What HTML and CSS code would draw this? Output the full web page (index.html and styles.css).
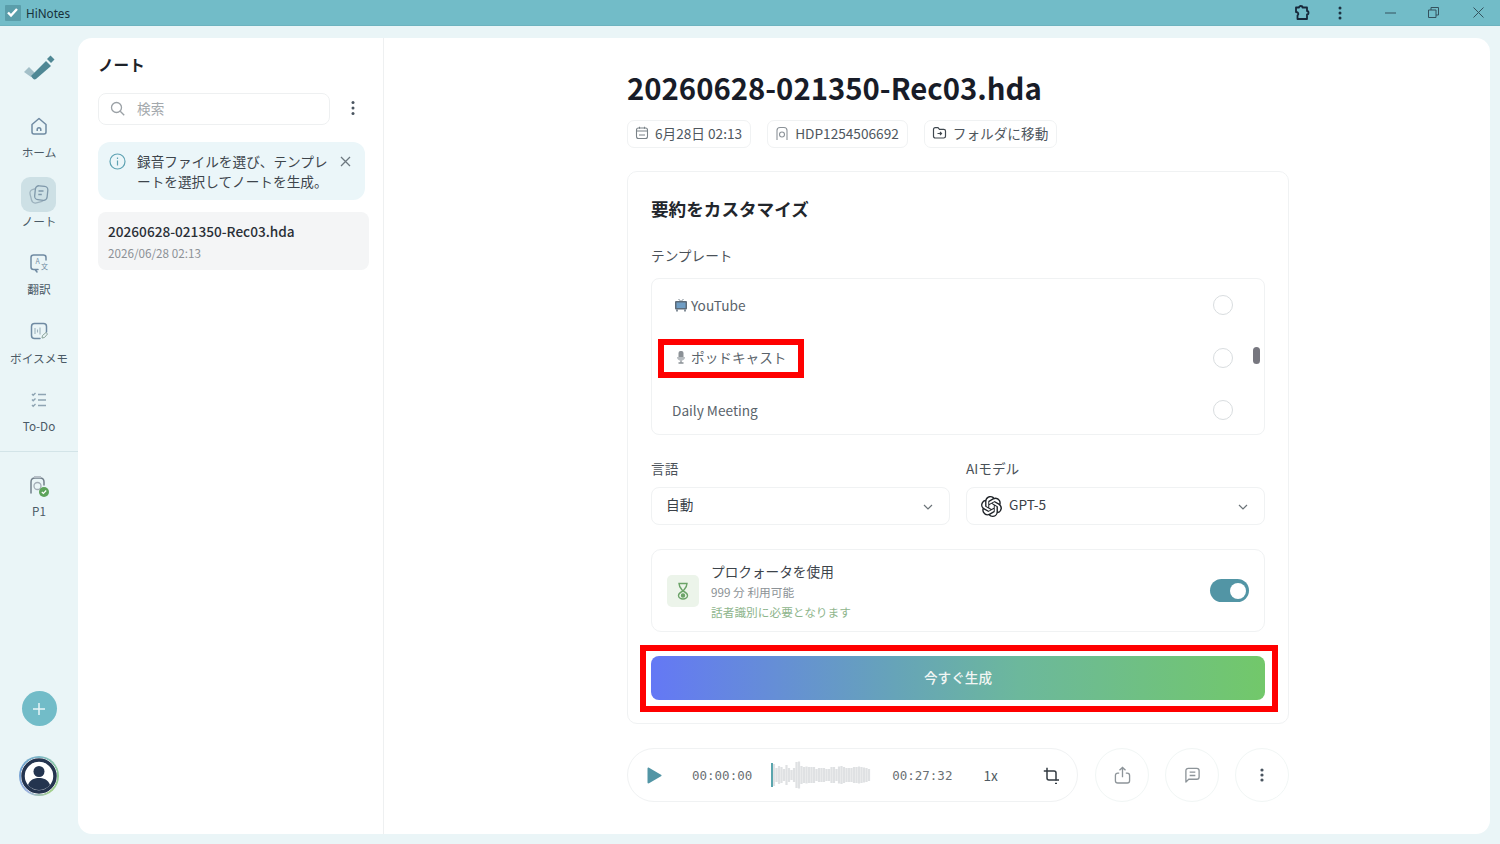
FILE: index.html
```html
<!DOCTYPE html>
<html lang="ja">
<head>
    <meta charset="UTF-8">
    <title>HiNotes</title>
    <link rel="stylesheet" href="styles.css">
</head>
<body>

    <header class="titlebar">
        <div class="app-name">
            <span class="app-icon">
                <svg width="15" height="15" viewBox="0 0 15 15"><path d="M3 7.500l3 3 6-6.500" fill="none" stroke="#fff" stroke-width="2.400"/></svg>
            </span>
            HiNotes
        </div>
        <div class="window-btns">
            <svg class="win-puzzle" width="18" height="18" viewBox="0 0 18 18"><path d="M3 3.500h3c0-2 3.500-2 3.500 0h4.500v3.500c2 0 2 3.500 0 3.500v4.500H4.500v-3.500c1.500-1 1-3.500-1.500-3.500z" fill="none" stroke="#16283a" stroke-width="1.800" stroke-linejoin="round"/></svg>
            <svg class="win-dots" width="4" height="14" viewBox="0 0 4 14"><circle cx="2" cy="2" r="1.500" fill="#1d3140"/><circle cx="2" cy="7" r="1.500" fill="#1d3140"/><circle cx="2" cy="12" r="1.500" fill="#1d3140"/></svg>
            <svg class="win-min" width="11" height="2" viewBox="0 0 11 2"><path d="M0 1h11" stroke="#34525e" stroke-width="1"/></svg>
            <svg class="win-max" width="11" height="11" viewBox="0 0 11 11"><path d="M.5 3h7.500v7.500H.5zM3 3V.5h7.500V8H8" fill="none" stroke="#34525e"/></svg>
            <svg class="win-close" width="11" height="11" viewBox="0 0 11 11"><path d="M.5.500l10 10M10.500.500l-10 10" stroke="#34525e"/></svg>
        </div>
    </header>

    <div class="app">
        <nav class="sidebar">
            <div class="logo">
                <svg width="32" height="28" viewBox="0 0 32 28">
                    <path d="M1 18l5-5 6 6-4 4z" fill="#a3bfc8"/>
                    <path d="M8 23L23 8l5 5-15 13c-2 1-3 0-5-3z" fill="#4f8794" transform="translate(0 -1)"/>
                    <path d="M25 6l3.500-3.500 4 4L29 10z" fill="#4f8794" transform="translate(-1 -1)"/>
                </svg>
            </div>
            <a class="nav-item">
                <span class="nav-icon">
                    <svg width="20" height="20" viewBox="0 0 20 20" fill="none" stroke="#6f8aa2" stroke-width="1.500"><path d="M3 8.500L10 2.500l7 6v7.500c0 1.200-.8 2-2 2H5c-1.200 0-2-.8-2-2z" stroke-linejoin="round"/><path d="M8.200 15v-1.500a1.800 1.800 0 0 1 3.600 0V15"/></svg>
                </span>
                ホーム
            </a>
            <a class="nav-item active">
                <span class="nav-icon">
                    <svg width="22" height="22" viewBox="0 0 22 22" fill="none" stroke="#7f98aa" stroke-width="1.300"><rect x="2.500" y="5.500" width="13" height="14" rx="4" transform="rotate(-14 9 12)" stroke="#9db2be"/><rect x="7" y="3" width="12.500" height="14" rx="3.500" transform="rotate(6 13 10)" fill="#cde0e5"/><path d="M10.500 8h5M10.300 11.500h3.500"/></svg>
                </span>
                ノート
            </a>
            <a class="nav-item">
                <span class="nav-icon">
                    <svg width="20" height="20" viewBox="0 0 20 20" fill="none"><path d="M9 16.500H4.500C3 16.500 2 15.500 2 14V4.500C2 3 3 2 4.500 2h10C16 2 17 3 17 4.500V7M6 16.500L8 19" stroke="#6f8aa2" stroke-width="1.500" stroke-linecap="round"/><text x="6.500" y="10.500" class="icon-text">A</text><text x="12" y="16" class="icon-text">文</text></svg>
                </span>
                翻訳
            </a>
            <a class="nav-item">
                <span class="nav-icon">
                    <svg width="20" height="20" viewBox="0 0 20 20" fill="none" stroke="#6f8aa2" stroke-width="1.500"><path d="M11 17.500H5.500C3.500 17.500 2.500 16.500 2.500 14.500v-9c0-2 1-3 3-3h9c2 0 3 1 3 3V11" stroke-linecap="round"/><path d="M6 7v6M8.500 8.500v3M11 6.500v7" stroke-width="1.100" stroke="#9db2be"/><path d="M13 17l.5-2.500 3.500-3 1.500 1.500-3 3.500z" stroke-width="1" stroke="#8aa39a"/></svg>
                </span>
                ボイスメモ
            </a>
            <a class="nav-item">
                <span class="nav-icon">
                    <svg width="18" height="18" viewBox="0 0 18 18" fill="none" stroke="#8ea4b3" stroke-width="1.400"><path d="M2 3l1.200 1.200L5.500 2M2 8.500l1.200 1.200 2.300-2.200M2 14l1.200 1.200 2.300-2.200"/><path d="M8 3.500h8M8 9h8M8 14.500h8"/></svg>
                </span>
                To-Do
            </a>
            <div class="nav-divider"></div>
            <a class="nav-item device">
                <span class="nav-icon">
                    <svg width="22" height="24" viewBox="0 0 22 24" fill="none"><path d="M3 19V8c0-2.500 1.500-4 4-4h5c2.500 0 4 1.500 4 4v3" stroke="#73808c" stroke-width="1.500" stroke-linecap="round"/><path d="M6 3h7" stroke="#b5bec6" stroke-width="2"/><circle cx="9.500" cy="12" r="3.500" stroke="#a3adb6" stroke-width="1.300"/><circle cx="16" cy="18" r="5" fill="#5da35a"/><path d="M13.800 18l1.600 1.500 2.800-3" stroke="#fff" stroke-width="1.200"/></svg>
                </span>
                P1
            </a>
            <button class="add-btn">
                <svg width="14" height="14" viewBox="0 0 14 14"><path d="M7 1v12M1 7h12" stroke="#e8f5f7" stroke-width="1.500"/></svg>
            </button>
            <div class="avatar">
                <svg width="36" height="36" viewBox="0 0 36 36">
                    <circle cx="18" cy="18" r="16" fill="#fff" stroke="#24344f" stroke-width="3.500"/>
                    <circle cx="18" cy="13.500" r="5.500" fill="#24344f"/>
                    <path d="M7 27c2-6 7-7 11-7s9 1 11 7c-3 3.500-7 5-11 5s-8-1.500-11-5z" fill="#24344f"/>
                </svg>
            </div>
        </nav>

        <main class="panel">
            <section class="note-list">
                <h2 class="list-title">ノート</h2>
                <div class="search-row">
                    <div class="search-box">
                        <svg width="15" height="15" viewBox="0 0 15 15" fill="none" stroke="#9ba1a6" stroke-width="1.300"><circle cx="6.500" cy="6.500" r="5"/><path d="M10.200 10.200l4 4"/></svg>
                        <span>検索</span>
                    </div>
                    <svg class="dots-icon" width="4" height="16" viewBox="0 0 4 16"><circle cx="2" cy="2.500" r="1.500" fill="#4a5560"/><circle cx="2" cy="8" r="1.500" fill="#4a5560"/><circle cx="2" cy="13.500" r="1.500" fill="#4a5560"/></svg>
                </div>
                <div class="info-box">
                    <svg class="info-icon" width="17" height="17" viewBox="0 0 17 17" fill="none" stroke="#5fa3b3" stroke-width="1.200"><circle cx="8.500" cy="8.500" r="7.500"/><path d="M8.500 7.500v5M8.500 4.500v1.400"/></svg>
                    <p>録音ファイルを選び、テンプレートを選択してノートを生成。</p>
                    <svg class="info-close" width="11" height="11" viewBox="0 0 11 11"><path d="M1 1l9 9M10 1l-9 9" stroke="#6d7880" stroke-width="1.300"/></svg>
                </div>
                <div class="note-item">
                    <div class="note-name">20260628-021350-Rec03.hda</div>
                    <div class="note-date">2026/06/28 02:13</div>
                </div>
            </section>

            <section class="detail">
                <h1 class="detail-title">20260628-021350-Rec03.hda</h1>
                <div class="chips">
                    <div class="chip">
                        <svg width="14" height="14" viewBox="0 0 14 14" fill="none" stroke="#7a8288" stroke-width="1.100"><rect x="1.500" y="2" width="11" height="10.500" rx="2"/><path d="M1.500 5h11M4.500 .8v2M9.500 .8v2M4 9h6" /></svg>
                        6月28日 02:13
                    </div>
                    <div class="chip">
                        <svg width="14" height="15" viewBox="0 0 14 15" fill="none" stroke="#8b9298" stroke-width="1.100"><path d="M2 14V4.500C2 2.500 3 1.500 5 1.500h4c2 0 3 1 3 3V14"/><circle cx="7" cy="8.500" r="2.500"/></svg>
                        HDP1254506692
                    </div>
                    <div class="chip">
                        <svg width="15" height="14" viewBox="0 0 15 14" fill="none" stroke="#40484f" stroke-width="1.200"><path d="M1.500 3.500c0-1 .7-1.800 1.800-1.800h2.700l1.500 1.600h4.200c1 0 1.800.8 1.800 1.800v5.200c0 1-.8 1.700-1.800 1.700H3.300c-1.100 0-1.800-.7-1.800-1.700z"/><path d="M5.500 7.500h4M8 6l1.500 1.500L8 9"/></svg>
                        フォルダに移動
                    </div>
                </div>

                <div class="card">
                    <h3 class="card-title">要約をカスタマイズ</h3>
                    <div class="field-label template-label">テンプレート</div>
                    <div class="template-list">
                        <div class="template-row">
                            <span class="template-name with-icon">
                                <svg width="14" height="14" viewBox="0 0 14 14"><path d="M4.500 1l2.500 2.500L9.500 1" fill="none" stroke="#7a8690" stroke-width="1"/><rect x="1" y="3" width="12" height="8.500" rx="1" fill="#5c6a78"/><rect x="2.500" y="4.500" width="9" height="5.500" fill="#6f9dc4"/><path d="M3 11.500v2M11 11.500v2" stroke="#5c6a78" stroke-width="1.500"/></svg>
                                YouTube
                            </span>
                            <span class="radio"></span>
                        </div>
                        <div class="template-row">
                            <span class="template-name with-icon">
                                <svg width="14" height="14" viewBox="0 0 14 14"><rect x="4.500" y="1" width="5" height="8" rx="2" fill="#8b9196"/><path d="M3 7c0 5 8 5 8 0" fill="#b7bcc0"/><path d="M7 10.500v2M4.500 13h5" stroke="#8b9196" stroke-width="1.300"/></svg>
                                ポッドキャスト
                            </span>
                            <span class="radio"></span>
                            <span class="highlight highlight-podcast"></span>
                        </div>
                        <div class="template-row">
                            <span class="template-name">Daily Meeting</span>
                            <span class="radio"></span>
                        </div>
                        <span class="scroll-thumb"></span>
                    </div>

                    <div class="select-row">
                        <div class="select-col">
                            <div class="field-label">言語</div>
                            <div class="select">
                                <span>自動</span>
                                <svg class="chevron" width="10" height="6" viewBox="0 0 10 6"><path d="M1 1l4 4 4-4" fill="none" stroke="#6b7378" stroke-width="1.200"/></svg>
                            </div>
                        </div>
                        <div class="select-col">
                            <div class="field-label">AIモデル</div>
                            <div class="select">
                                <span class="model">
                                    <svg width="21" height="21" viewBox="0 0 24 24"><path fill="#1f2328" d="M22.2819 9.8211a5.9847 5.9847 0 0 0-.5157-4.9108 6.0462 6.0462 0 0 0-6.5098-2.9A6.0651 6.0651 0 0 0 4.9807 4.1818a5.9847 5.9847 0 0 0-3.9977 2.9 6.0462 6.0462 0 0 0 .7427 7.0966 5.98 5.98 0 0 0 .511 4.9107 6.051 6.051 0 0 0 6.5146 2.9001A5.9847 5.9847 0 0 0 13.2599 24a6.0557 6.0557 0 0 0 5.7718-4.2058 5.9894 5.9894 0 0 0 3.9977-2.9001 6.0557 6.0557 0 0 0-.7475-7.0729zm-9.022 12.6081a4.4755 4.4755 0 0 1-2.8764-1.0408l.1419-.0804 4.7783-2.7582a.7948.7948 0 0 0 .3927-.6813v-6.7369l2.02 1.1686a.071.071 0 0 1 .038.052v5.5826a4.504 4.504 0 0 1-4.4945 4.4944zm-9.6607-4.1254a4.4708 4.4708 0 0 1-.5346-3.0137l.142.0852 4.783 2.7582a.7712.7712 0 0 0 .7806 0l5.8428-3.3685v2.3324a.0804.0804 0 0 1-.0332.0615L9.74 19.9502a4.4992 4.4992 0 0 1-6.1408-1.6464zM2.3408 7.8956a4.485 4.485 0 0 1 2.3655-1.9728V11.6a.7664.7664 0 0 0 .3879.6765l5.8144 3.3543-2.0201 1.1685a.0757.0757 0 0 1-.071 0l-4.8303-2.7865A4.504 4.504 0 0 1 2.3408 7.872zm16.5963 3.8558L13.1038 8.364 15.1192 7.2a.0757.0757 0 0 1 .071 0l4.8303 2.7913a4.4944 4.4944 0 0 1-.6765 8.1042v-5.6772a.79.79 0 0 0-.407-.667zm2.0107-3.0231l-.142-.0852-4.7735-2.7818a.7759.7759 0 0 0-.7854 0L9.409 9.2297V6.8974a.0662.0662 0 0 1 .0284-.0615l4.8303-2.7866a4.4992 4.4992 0 0 1 6.6802 4.66zM8.3065 12.863l-2.02-1.1638a.0804.0804 0 0 1-.038-.0567V6.0742a4.4992 4.4992 0 0 1 7.3757-3.4537l-.142.0805L8.704 5.459a.7948.7948 0 0 0-.3927.6813zm1.0976-2.3654l2.602-1.4998 2.6069 1.4998v2.9994l-2.5974 1.4997-2.6067-1.4997Z"/></svg>
                                    GPT-5
                                </span>
                                <svg class="chevron" width="10" height="6" viewBox="0 0 10 6"><path d="M1 1l4 4 4-4" fill="none" stroke="#6b7378" stroke-width="1.200"/></svg>
                            </div>
                        </div>
                    </div>

                    <div class="quota">
                        <div class="quota-icon">
                            <svg width="14" height="18" viewBox="0 0 14 18" fill="none" stroke="#6ba368" stroke-width="1.400"><path d="M3 1.500h8c0 3.500-2 5-4 7.500-2-2.500-4-4-4-7.500zM7 9c-3 1.500-4.500 3-4.500 4.500a4.500 3.500 0 0 0 9 0C11.500 12 10 10.500 7 9z"/><circle cx="7" cy="13.500" r="1.500" fill="#6ba368"/></svg>
                        </div>
                        <div class="quota-text">
                            <div class="quota-title">プロクォータを使用</div>
                            <div class="quota-sub">999 分 利用可能</div>
                            <div class="quota-note">話者識別に必要となります</div>
                        </div>
                        <div class="toggle"><span class="toggle-knob"></span></div>
                    </div>

                    <button class="generate-btn">
                        今すぐ生成
                        <span class="highlight highlight-generate"></span>
                    </button>
                </div>

                <div class="player-row">
                    <div class="player">
                        <svg class="play-icon" width="16" height="17" viewBox="0 0 16 17"><path d="M1.500 1.500C1.500.8 2.200.3 3 .7l12 7c.7.4.7 1.200 0 1.600l-12 7c-.8.4-1.500 0-1.500-.8z" fill="#5295a5"/></svg>
                        <span class="time time-now">00:00:00</span>
                        <svg class="wave" width="100" height="30" viewBox="0 0 100 30">
                            <path d="M3 4v22M5.500 8v14M8 6v18M10.500 7v16M13 9v12M15.500 5v20M18 8v14M20.500 10v10M23 8v14M25.500 2v26M28 1.500v27M30.500 6v18M33 7v16M35.500 6.500v17M38 7v16M40.500 7v16M43 7v16M45.500 9v12M48 8v14M50.500 8v14M53 8v14M55.500 9v12M58 9v12M60.500 7v16M63 7v16M65.500 9v12M68 6.500v17M70.500 6v18M73 7v16M75.500 8v14M78 8v14M80.500 8v14M83 7v16M85.500 7v16M88 6.500v17M90.500 7v16M93 7.500v15M95.500 8v14M98 9v12" fill="none" stroke="#dfe1e3" stroke-width="2.200"/>
                            <path d="M1 3v24" stroke="#5aa5ad" stroke-width="2"/>
                        </svg>
                        <span class="time time-total">00:27:32</span>
                        <span class="speed">1x</span>
                        <svg class="crop-icon" width="17" height="17" viewBox="0 0 17 17" fill="none" stroke="#333b42" stroke-width="1.500"><path d="M4 .8V11c0 1.200.8 2 2 2h10"/><path d="M.8 4H11c1.200 0 2 .8 2 2v7.500"/><path d="M12 16.500h2"/></svg>
                    </div>
                    <button class="round-btn">
                        <svg width="17" height="18" viewBox="0 0 18 19" fill="none" stroke="#8d9499" stroke-width="1.400"><path d="M5.500 7.500H4c-1.500 0-2.500 1-2.500 2.500v5.500c0 1.500 1 2.500 2.500 2.500h10c1.500 0 2.500-1 2.500-2.500V10c0-1.500-1-2.500-2.500-2.500h-1.500"/><path d="M9 12V1.500M5.800 4.500L9 1.500l3.200 3"/></svg>
                    </button>
                    <button class="round-btn">
                        <svg width="17" height="17" viewBox="0 0 18 18" fill="none" stroke="#8d9499" stroke-width="1.400"><path d="M2 4c0-1.500 1-2.500 2.500-2.500h9C15 1.500 16 2.500 16 4v6.500c0 1.500-1 2.500-2.500 2.500H5L2 16z" stroke-linejoin="round"/><path d="M6 5.500h6M6 9h6"/></svg>
                    </button>
                    <button class="round-btn">
                        <svg width="4" height="14" viewBox="0 0 4 14"><circle cx="2" cy="2" r="1.600" fill="#4a5560"/><circle cx="2" cy="7" r="1.600" fill="#4a5560"/><circle cx="2" cy="12" r="1.600" fill="#4a5560"/></svg>
                    </button>
                </div>
            </section>
        </main>
    </div>

</body>
</html>
```

FILE: styles.css
```css
* {
    margin: 0;
    padding: 0;
    box-sizing: border-box;
    font-family: "Noto Sans CJK JP", "Noto Sans", sans-serif;
}

body {
    display: flex;
    flex-direction: column;
    width: 1500px;
    height: 844px;
    overflow: hidden;
    background: #eaf5f7;
    color: #2a2f36;
}

button {
    border: none;
    cursor: pointer;
}

/* title bar */
.titlebar {
    display: flex;
    justify-content: space-between;
    align-items: center;
    height: 26px;
    flex-shrink: 0;
    background: #72bcc8;
    border-bottom: 1px solid #6db3bf;
    padding: 0 16px 0 5px;
}

.app-name {
    display: flex;
    align-items: center;
    gap: 5px;
    margin-top: 1px;
    font-family: "Noto Sans", sans-serif;
    font-size: 11.700px;
    color: #17303a;
}

.app-icon {
    display: flex;
    width: 16px;
    height: 16px;
    background: #5a9eaa;
    border-radius: 1px;
}

.window-btns {
    display: flex;
    align-items: center;
}

.win-dots { margin-left: 27px; }
.win-min { margin-left: 43px; }
.win-max { margin-left: 32px; }
.win-close { margin-left: 34px; }

/* layout */
.app {
    display: flex;
    flex: 1;
    min-height: 0;
}

.sidebar {
    width: 78px;
    flex-shrink: 0;
    display: flex;
    flex-direction: column;
    align-items: center;
    padding-bottom: 48px;
}

.logo {
    display: flex;
    justify-content: center;
    margin-top: 28px;
    height: 28px;
    margin-bottom: 26px;
}

.nav-item {
    display: flex;
    flex-direction: column;
    align-items: center;
    height: 68.500px;
    font-size: 11.700px;
    line-height: 18px;
    color: #4b5a66;
}

.nav-icon {
    display: flex;
    justify-content: center;
    align-items: center;
    width: 35px;
    height: 35px;
    border-radius: 9px;
}

.active .nav-icon {
    background: #cde0e5;
}

.device .nav-icon {
    height: 30px;
    margin-bottom: 1px;
}

.icon-text {
    font-size: 7px;
    fill: #7590a6;
}

.nav-divider {
    width: 100%;
    height: 1px;
    flex-shrink: 0;
    background: #d3e4e8;
    margin-bottom: 19px;
}

.add-btn {
    display: flex;
    justify-content: center;
    align-items: center;
    width: 35px;
    height: 35px;
    border-radius: 50%;
    background: #72bcc8;
    margin-top: auto;
}

.avatar {
    display: flex;
    justify-content: center;
    align-items: center;
    width: 40px;
    height: 40px;
    margin-top: 30px;
    border-radius: 50%;
    background: radial-gradient(circle, #fff 18px, transparent 18.500px),
        conic-gradient(#7fb8c8, #8ec9a0, #a3cf8c, #9fb4e0, #6f9fd0, #7fb8c8);
}

.panel {
    flex: 1;
    display: flex;
    background: #fff;
    border-radius: 14px;
    margin: 12px 10px 10px 0;
    overflow: hidden;
}

/* note list */
.note-list {
    width: 306px;
    flex-shrink: 0;
    border-right: 1px solid #eef0f1;
    padding: 14px 14px 0 20px;
}

.list-title {
    font-size: 15.600px;
    font-weight: 700;
    line-height: 24px;
    color: #1d2229;
}

.search-row {
    display: flex;
    align-items: center;
    margin-top: 17px;
}

.search-box {
    display: flex;
    align-items: center;
    gap: 12px;
    width: 232px;
    height: 32px;
    border: 1px solid #eef0f1;
    border-radius: 8px;
    padding: 0 0 2px 11px;
    font-size: 13.650px;
    color: #a4a9ad;
}

.dots-icon {
    margin: 0 0 2px 21px;
}

.info-box {
    display: flex;
    align-items: flex-start;
    width: 267px;
    height: 58px;
    margin-top: 17px;
    padding: 8.500px 13px 0 11px;
    background: #ebf6f9;
    border-radius: 12px;
    font-size: 13.650px;
    line-height: 20px;
    color: #3d454c;
    line-break: loose;
}

.info-icon {
    flex-shrink: 0;
    margin: 2.500px 11px 0 0;
}

.info-close {
    flex-shrink: 0;
    margin: 5.500px 1px 0 8px;
}

.note-item {
    height: 58px;
    margin-top: 12px;
    padding: 8px 10px 0;
    background: #f4f5f6;
    border-radius: 8px;
}

.note-name {
    font-size: 13.650px;
    font-weight: 500;
    line-height: 22px;
    color: #2a2f36;
}

.note-date {
    font-size: 11.700px;
    line-height: 20px;
    margin-top: 1px;
    color: #8c9196;
}

/* detail */
.detail {
    flex: 1;
    padding: 29px 201px 0 243px;
}

.detail-title {
    font-size: 29.300px;
    font-weight: 700;
    line-height: 40px;
    color: #181c28;
    white-space: nowrap;
}

.chips {
    display: flex;
    gap: 16px;
    margin-top: 13px;
}

.chip {
    display: flex;
    align-items: center;
    gap: 6px;
    height: 28px;
    padding: 0 8px 2px 7px;
    border: 1px solid #f0f2f3;
    border-radius: 7px;
    font-size: 13.650px;
    color: #4f575e;
    white-space: nowrap;
}

.card {
    margin-top: 23px;
    height: 553px;
    padding: 24px 23px 0;
    border: 1px solid #f0f2f3;
    border-radius: 10px;
}

.card-title {
    font-size: 17.600px;
    font-weight: 700;
    line-height: 26px;
    color: #22262c;
}

.field-label {
    font-size: 13.650px;
    line-height: 20px;
    color: #4a5158;
}

.template-label {
    margin-top: 23px;
}

.template-list {
    position: relative;
    display: flex;
    flex-direction: column;
    height: 157px;
    margin-top: 13px;
    border: 1px solid #f0f2f3;
    border-radius: 8px;
}

.template-row {
    position: relative;
    height: 52.500px;
    flex-shrink: 0;
    display: flex;
    justify-content: space-between;
    align-items: center;
    padding: 0 31px 0 20px;
}

.template-name {
    display: flex;
    align-items: center;
    gap: 3px;
    margin-bottom: 1px;
    font-size: 13.650px;
    color: #5a636b;
}

.with-icon {
    margin-left: 2px;
}

.radio {
    width: 20px;
    height: 20px;
    border: 1.500px solid #d9dddf;
    border-radius: 50%;
}

.scroll-thumb {
    position: absolute;
    right: 4px;
    top: 68px;
    width: 7.500px;
    height: 17px;
    border-radius: 4px;
    background: #77777f;
}

.highlight {
    position: absolute;
    border: 6px solid #ff0000;
    pointer-events: none;
}

.highlight-podcast {
    left: 6px;
    top: 7px;
    width: 146px;
    height: 39px;
}

.highlight-generate {
    left: -11px;
    top: -11px;
    width: 638px;
    height: 67px;
}

.select-row {
    display: flex;
    gap: 16px;
    margin-top: 23px;
}

.select-col {
    flex: 1;
}

.select {
    display: flex;
    justify-content: space-between;
    align-items: center;
    height: 38px;
    margin-top: 9px;
    padding: 0 16px 4px 14px;
    border: 1px solid #f0f2f3;
    border-radius: 8px;
    font-size: 13.650px;
    color: #3a4148;
}

.chevron {
    margin-top: 6px;
}

.model {
    display: flex;
    align-items: center;
    gap: 7px;
}

.model svg {
    margin-top: 4px;
}

.quota {
    display: flex;
    align-items: center;
    height: 83px;
    margin-top: 24px;
    padding: 0 15px;
    border: 1px solid #f0f2f3;
    border-radius: 10px;
}

.quota-icon {
    display: flex;
    justify-content: center;
    align-items: center;
    width: 32px;
    height: 32px;
    border-radius: 5px;
    background: #ecf4ea;
    margin-right: 12px;
}

.quota-text {
    flex: 1;
    padding-top: 1px;
}

.quota-title {
    font-size: 13.650px;
    line-height: 20px;
    color: #3d444b;
}

.quota-sub {
    font-size: 11.700px;
    line-height: 20px;
    margin-top: 1px;
    color: #8c9296;
}

.quota-note {
    font-size: 11.700px;
    line-height: 20px;
    color: #8eb58c;
}

.toggle {
    display: flex;
    justify-content: flex-end;
    align-items: center;
    width: 39.500px;
    height: 23px;
    padding-right: 3px;
    border-radius: 12px;
    background: #5295a5;
}

.toggle-knob {
    width: 16px;
    height: 16px;
    border-radius: 50%;
    background: #fff;
}

.generate-btn {
    position: relative;
    display: block;
    width: 100%;
    height: 44px;
    margin-top: 24px;
    padding-bottom: 2px;
    border-radius: 8px;
    background: linear-gradient(to right, #6478f5, #66a4b8 40%, #6cb89c 60%, #72c86a);
    color: #f2f6f4;
    font-size: 13.650px;
    font-weight: 500;
}

/* player */
.player-row {
    display: flex;
    gap: 16px;
    margin-top: 24px;
}

.player {
    display: flex;
    align-items: center;
    width: 451px;
    height: 54px;
    margin-right: 1px;
    padding-left: 18px;
    border: 1px solid #f0f2f3;
    border-radius: 27px;
}

.play-icon { flex-shrink: 0; }

.time {
    font-family: "DejaVu Sans Mono", monospace;
    font-size: 12.500px;
    color: #6a6f73;
}

.time-now { margin-left: 30px; }
.wave { margin-left: 19px; }
.time-total { margin-left: 21px; }

.speed {
    margin-left: 31px;
    width: 16px;
    font-size: 13.650px;
    color: #4f5a62;
}

.crop-icon {
    margin-left: 44px;
}

.round-btn {
    display: flex;
    justify-content: center;
    align-items: center;
    width: 54px;
    height: 54px;
    border-radius: 50%;
    background: #fff;
    border: 1px solid #f1f6f5;
}
```
